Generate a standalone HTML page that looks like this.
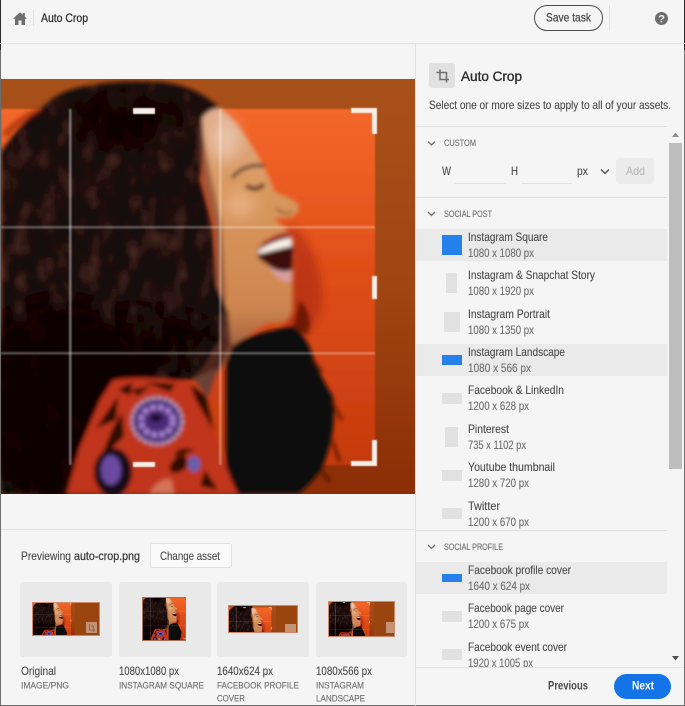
<!DOCTYPE html>
<html><head><meta charset="utf-8"><title>Auto Crop</title>
<style>
html,body{margin:0;padding:0;background:#f5f5f5;width:685px;height:706px;overflow:hidden}
svg{display:block}
text{font-family:"Liberation Sans",sans-serif;font-size:12px;fill:#4b4b4b}
.n{fill:#4b4b4b;stroke:#4b4b4b;stroke-width:.12}
.s{fill:#6e6e6e;stroke:#6e6e6e;stroke-width:.12}
.m{fill:#2c2c2c;stroke:#2c2c2c;stroke-width:.25}
.c{font-size:9px;fill:#6e6e6e;stroke:#6e6e6e;stroke-width:.12}
.b{font-weight:bold}
</style></head><body>
<svg width="685" height="706" viewBox="0 0 685 706" xmlns="http://www.w3.org/2000/svg">
<defs>
<filter id="bl" x="-5%" y="-5%" width="110%" height="110%"><feGaussianBlur stdDeviation="2.200"/></filter>
<filter id="bls" x="-5%" y="-5%" width="110%" height="110%"><feGaussianBlur stdDeviation=".8"/></filter>
<filter id="blm" x="-30%" y="-30%" width="160%" height="160%"><feGaussianBlur stdDeviation="4"/></filter>
<filter id="bl2" x="-30%" y="-30%" width="160%" height="160%"><feGaussianBlur stdDeviation="7"/></filter>
<filter id="th" x="-5%" y="-5%" width="110%" height="110%"><feGaussianBlur stdDeviation=".35"/></filter>
<filter id="hairtex" x="0" y="0" width="100%" height="100%">
<feTurbulence type="fractalNoise" baseFrequency=".07 .035" numOctaves="4" seed="11"/>
<feColorMatrix values="0 0 0 0 .32  0 0 0 0 .11  0 0 0 0 .07  1.3 0 0 0 -.58"/>
<feComposite in2="SourceAlpha" operator="in"/>
</filter>
<linearGradient id="bg" x1="0" y1="0" x2="0" y2="1"><stop offset="0" stop-color="#f4672a"/><stop offset=".45" stop-color="#e04e18"/><stop offset="1" stop-color="#c5390e"/></linearGradient>
<linearGradient id="band" x1="0" y1="0" x2="0" y2="1"><stop offset="0" stop-color="#a8501a"/><stop offset=".5" stop-color="#a14512"/><stop offset="1" stop-color="#8c2d06"/></linearGradient>
<linearGradient id="hairg" x1="0" y1="0" x2="0" y2="1"><stop offset="0" stop-color="#1a0908"/><stop offset=".55" stop-color="#150707"/><stop offset="1" stop-color="#0c0807"/></linearGradient>
<linearGradient id="skin" x1="0" y1="0" x2="0" y2="1"><stop offset="0" stop-color="#e2ae90"/><stop offset=".3" stop-color="#d9985e"/><stop offset=".75" stop-color="#cf8650"/><stop offset="1" stop-color="#8a4c34"/></linearGradient>
<clipPath id="listclip"><rect x="416" y="127" width="251" height="540"/></clipPath>
<clipPath id="t1"><rect x="32" y="602" width="68" height="33.500"/></clipPath>
<clipPath id="t2"><rect x="142" y="597" width="44" height="44"/></clipPath>
<clipPath id="t3"><rect x="228" y="605" width="70" height="28"/></clipPath>
<clipPath id="t4"><rect x="328" y="601" width="67" height="36"/></clipPath>
<symbol id="p" viewBox="1 79 414 415">
<rect x="1" y="79" width="414" height="415" fill="url(#band)"/>
<rect x="1" y="109" width="374" height="356" fill="url(#bg)" filter="url(#bls)"/>
<g filter="url(#bl)">
<!-- wild hair near mouth -->
<path d="M288 222C304 232 318 256 320 280 326 305 318 325 304 335L286 330 290 262Z" fill="#a8260a" opacity=".6" filter="url(#blm)"/>
<path d="M300 300C310 310 312 325 308 335L292 330Z" fill="#3a0c06" opacity=".6"/>
<!-- hair behind neck -->
<path d="M226 345 260 333 290 326C302 330 310 345 314 360 320 375 326 385 333 397 336 420 332 445 322 468 314 480 306 488 298 494H226Z" fill="#0d0807"/>
<path d="M312 360 322 372M330 400 342 420M332 440 340 462M320 470 330 482" stroke="#3a0c06" stroke-width="3" opacity=".7"/>
<!-- main hair -->
<path d="M1 152C14 132 28 118 40 110 48 100 58 94 70 90 90 84 120 80 160 82 185 84 205 94 220 108L205 130 200 180 212 225 216 285 228 310 232 345 218 372 190 380 110 382 85 430 60 494H1Z" fill="url(#hairg)"/>
<path d="M1 152C14 132 28 118 40 110 48 100 58 94 70 90 90 84 120 80 160 82 185 84 205 94 220 108L205 130 200 180 212 225 216 285 228 310 232 345 218 372 190 380 110 382 85 430 60 494H1Z" fill="#000" filter="url(#hairtex)" opacity=".75"/>
<ellipse cx="60" cy="405" rx="85" ry="100" fill="#0a0605" opacity=".85" filter="url(#bl2)"/>
<ellipse cx="140" cy="345" rx="70" ry="30" fill="#0a0605" opacity=".65" filter="url(#bl2)"/>
<ellipse cx="125" cy="120" rx="55" ry="28" fill="#0a0605" opacity=".75" filter="url(#bl2)"/>
<path d="M5 135C14 124 26 116 40 110" stroke="#8a1f0a" stroke-width="6" opacity=".6" fill="none"/>
<!-- skin -->
<path d="M202 118C208 110 216 107 222 109 232 117 242 130 252 146 262 162 270 178 275 192 284 196 292 198 298 204 300 210 298 214 292 217L274 219C280 224 286 228 290 236L293 250 292 278 292 310C290 318 285 324 276 323 266 322 256 330 246 337L232 346 226 362 218 372 230 346 228 312 218 288 216 225 206 180Z" fill="url(#skin)"/>
<path d="M200 118C196 135 198 165 204 190L214 225 216 288 228 312 232 345 218 372 208 380 196 378 220 340 226 300 222 225 210 170Z" fill="#7a4030" opacity=".6"/>
<ellipse cx="240" cy="205" rx="16" ry="14" fill="#eeb890" opacity=".7" filter="url(#bl2)"/>
<ellipse cx="225" cy="140" rx="14" ry="20" fill="#eccab4" opacity=".8" filter="url(#bl2)"/>
<!-- brow/eye -->
<path d="M232 178C240 168 252 164 264 166" stroke="#1e0c08" stroke-width="3" fill="none"/>
<path d="M246 186C254 190 258 190 264 184" stroke="#3a1c10" stroke-width="4" fill="none"/>
<path d="M276 208C282 214 288 214 293 212" stroke="#8a5030" stroke-width="2" fill="none"/>
<!-- mouth -->
<path d="M258 248 288 232 293 246 292 270 286 276 272 268 258 258Z" fill="#3c0a0e"/>
<path d="M259 250C270 243 282 239 291 238L292 246C282 248 268 252 258 254Z" fill="#fbf3ea"/>
<path d="M262 243C272 236 280 232 290 232L288 237C278 238 270 241 262 247Z" fill="#a8302c"/>
<path d="M268 266C278 272 286 272 292 270L291 282C282 282 274 276 268 266Z" fill="#d8a0a0"/>
<!-- jacket -->
<path d="M113 380C135 376 165 378 187 382L203 393 213 430 230 477 238 494H67L80 447 100 400Z" fill="#c0341a"/>
<path d="M190 384 206 396 214 432 196 400ZM170 465C180 450 190 452 186 468 176 476 168 474 170 465ZM118 390 132 382 130 396ZM112 430 122 412 124 436 100 460ZM194 450C185 446 172 450 176 458ZM145 382 175 384 170 392ZM96 428 118 396 116 420ZM205 470 218 490 200 486ZM130 390 150 386 138 396Z" fill="#2e0a06"/>
<ellipse cx="113" cy="472" rx="19" ry="24" fill="#140c12"/>
<ellipse cx="111" cy="470" rx="10" ry="15" fill="#6a4aa0"/>
<ellipse cx="157" cy="421" rx="26" ry="24" fill="#4c2a78"/>
<ellipse cx="157" cy="421" rx="25" ry="23" fill="none" stroke="#e8d8ee" stroke-width="2.500" stroke-dasharray="3 3"/>
<ellipse cx="157" cy="421" rx="16" ry="14" fill="none" stroke="#b890e0" stroke-width="5" stroke-dasharray="5 3"/>
<ellipse cx="156" cy="418" rx="6" ry="4" fill="#1a0c28"/>
<ellipse cx="194" cy="464" rx="6" ry="8" fill="#6060b0"/>
<path d="M150 494C152 485 165 476 172 480L174 494Z" fill="#e8b098" opacity=".5"/>
<!-- neck-skin collar -->
<path d="M193 378 218 368 208 398Z" fill="#6a4034"/>
</g>
<!-- grid -->
<g fill="#fff" filter="url(#bls)">
<rect x="69" y="109" width="2.500" height="356" opacity=".42"/>
<rect x="219" y="109" width="2.500" height="356" opacity=".32"/>
<rect x="1" y="226" width="374" height="2.500" opacity=".3"/>
<rect x="1" y="352" width="374" height="2.500" opacity=".3"/>
</g>
<g fill="#f4efe9" style="filter:blur(.6px)">
<rect x="133" y="108" width="22" height="6"/>
<rect x="133" y="462" width="22" height="5"/>
<rect x="372" y="276" width="5" height="23"/>
<path d="M351 108H377V134H372V113H351Z"/>
<path d="M372 440H377V466H351V461H372Z"/>
</g>
</symbol>
</defs>

<rect width="685" height="706" fill="#f5f5f5"/>
<!-- window edges -->
<rect x="0" y="0" width="1" height="50" fill="#2c2c2c"/>
<rect x="0" y="50" width="1" height="656" fill="#6e6e6e"/>
<rect x="684" y="0" width="1" height="50" fill="#2c2c2c"/>
<rect x="684" y="50" width="1" height="656" fill="#6e6e6e"/>
<rect x="0" y="705" width="685" height="1" fill="#6e6e6e"/>

<!-- header -->
<path d="M20 12.200 13 18.700H15V25H18.500V20.500H21.500V25H25V18.700H27L24.800 16.600V13H22.800V14.700Z" fill="#6e6e6e"/>
<rect x="33" y="10" width="1" height="16" fill="#e1e1e1"/>
<text x="41" y="22" class="m" textLength="47" lengthAdjust="spacingAndGlyphs">Auto Crop</text>
<rect x="534.500" y="5.500" width="68" height="25" rx="12.500" fill="#f5f5f5" stroke="#4b4b4b"/>
<text x="546" y="21.500" class="n" textLength="45" lengthAdjust="spacingAndGlyphs" style="stroke-width:.25">Save task</text>
<rect x="609" y="5" width="1" height="26" fill="#e1e1e1"/>
<circle cx="661.500" cy="18.500" r="6.500" fill="#6e6e6e"/>
<text x="658.300" y="22.500" style="font-size:11px;font-weight:bold;fill:#f5f5f5">?</text>
<rect x="0" y="43" width="685" height="1" fill="#e1e1e1"/>
<rect x="415" y="44" width="1" height="662" fill="#e1e1e1"/>

<!-- photo -->
<use href="#p" x="1" y="79" width="414" height="415"/>

<!-- preview -->
<rect x="1" y="529" width="414" height="1" fill="#e1e1e1"/>
<text x="21" y="560" class="n" textLength="50" lengthAdjust="spacingAndGlyphs">Previewing</text>
<text x="74" y="560" class="m" textLength="66" lengthAdjust="spacingAndGlyphs" style="fill:#3a3a3a;stroke:#3a3a3a">auto-crop.png</text>
<rect x="150.500" y="543.500" width="81" height="24" rx="2" fill="#fafafa" stroke="#e1e1e1"/>
<text x="160" y="560" class="n" textLength="60" lengthAdjust="spacingAndGlyphs">Change asset</text>

<rect x="20" y="582" width="92" height="75" rx="3" fill="#e9e9e9"/>
<rect x="119" y="582" width="92" height="75" rx="3" fill="#e9e9e9"/>
<rect x="217" y="582" width="92" height="75" rx="3" fill="#e9e9e9"/>
<rect x="316" y="582" width="91" height="75" rx="3" fill="#e9e9e9"/>

<g clip-path="url(#t1)"><rect x="32" y="602" width="68" height="34" fill="#9a4510"/><use href="#p" x="33" y="599.500" width="42" height="42" filter="url(#th)"/></g>
<rect x="32.500" y="602.500" width="67" height="33" fill="none" stroke="#cf8a6c"/>
<rect x="86" y="622" width="11" height="11" fill="#fff" fill-opacity=".42"/>
<path d="M89.500 624V630H95M91 626H93.500V632" stroke="#8a6a5a" fill="none" stroke-width="1"/>

<g clip-path="url(#t2)"><rect x="142" y="597" width="44" height="44" fill="#9a4510"/><use href="#p" x="142" y="593.500" width="49" height="49" filter="url(#th)"/></g>
<rect x="142.500" y="597.500" width="43" height="43" fill="none" stroke="#a87058" stroke-width="1"/>

<g clip-path="url(#t3)"><rect x="228" y="605" width="70" height="28" fill="#9a4510"/><use href="#p" x="228" y="604" width="48" height="48" filter="url(#th)"/>
<rect x="285" y="624" width="11" height="11" fill="#fff" fill-opacity=".42"/></g>
<rect x="228.500" y="605.500" width="69" height="27" fill="none" stroke="#cf8a6c"/>

<g clip-path="url(#t4)"><rect x="328" y="601" width="67" height="36" fill="#9a4510"/><use href="#p" x="328" y="599" width="46" height="46" filter="url(#th)"/>
<rect x="386" y="622" width="11" height="11" fill="#fff" fill-opacity=".42"/></g>
<rect x="328.500" y="601.500" width="66" height="35" fill="none" stroke="#cf8a6c"/>

<text x="21" y="675" class="n" textLength="35" lengthAdjust="spacingAndGlyphs">Original</text>
<text x="21" y="688.500" class="c" textLength="48" lengthAdjust="spacingAndGlyphs">IMAGE/PNG</text>
<text x="119" y="675" class="n" textLength="60" lengthAdjust="spacingAndGlyphs">1080x1080 px</text>
<text x="119" y="688.500" class="c" textLength="85" lengthAdjust="spacingAndGlyphs">INSTAGRAM SQUARE</text>
<text x="217" y="675" class="n" textLength="56" lengthAdjust="spacingAndGlyphs">1640x624 px</text>
<text x="217" y="688.500" class="c" textLength="82" lengthAdjust="spacingAndGlyphs">FACEBOOK PROFILE</text>
<text x="217" y="701.500" class="c" textLength="28" lengthAdjust="spacingAndGlyphs">COVER</text>
<text x="316" y="675" class="n" textLength="56" lengthAdjust="spacingAndGlyphs">1080x566 px</text>
<text x="316" y="688.500" class="c" textLength="48" lengthAdjust="spacingAndGlyphs">INSTAGRAM</text>
<text x="316" y="701.500" class="c" textLength="49" lengthAdjust="spacingAndGlyphs">LANDSCAPE</text>

<!-- right panel head -->
<rect x="429" y="63" width="26" height="25" rx="3" fill="#e1e1e1"/>
<path d="M440 69.500V79.500H449M436.500 72.500H446.500V82.500" fill="none" stroke="#6e6e6e" stroke-width="1.500"/>
<text x="461" y="81" class="m" style="font-size:14px;stroke-width:.35" textLength="61" lengthAdjust="spacingAndGlyphs">Auto Crop</text>
<text x="429" y="109" class="n" textLength="242" lengthAdjust="spacingAndGlyphs">Select one or more sizes to apply to all of your assets.</text>
<rect x="416" y="126" width="251" height="1" fill="#e1e1e1"/>

<!-- scrollbar -->
<rect x="669" y="143" width="13" height="326" fill="#bdbdbd"/>
<path d="M675.500 132.500 679 137H672Z" fill="#8e8e8e"/>
<path d="M672 656H679L675.500 660.500Z" fill="#505050"/>

<!-- custom -->
<path d="M428 141.500 431.500 145 435 141.500" fill="none" stroke="#6e6e6e" stroke-width="1.300"/>
<text x="444" y="146" class="c" textLength="32" lengthAdjust="spacingAndGlyphs">CUSTOM</text>
<text x="442" y="175" class="n" textLength="9" lengthAdjust="spacingAndGlyphs">W</text>
<rect x="455" y="183" width="51" height="1" fill="#e1e1e1"/>
<text x="511" y="175" class="n" textLength="7" lengthAdjust="spacingAndGlyphs">H</text>
<rect x="521" y="183" width="51" height="1" fill="#e1e1e1"/>
<text x="577" y="175" class="n" textLength="11" lengthAdjust="spacingAndGlyphs">px</text>
<path d="M601 169.500 605 173.500 609 169.500" fill="none" stroke="#4b4b4b" stroke-width="1.300"/>
<rect x="616" y="158" width="38" height="26" rx="3" fill="#ebebeb"/>
<text x="626" y="175" style="fill:#b3b3b3" textLength="19" lengthAdjust="spacingAndGlyphs">Add</text>
<rect x="416" y="197" width="251" height="1" fill="#e1e1e1"/>

<!-- social post -->
<path d="M428 212 431.500 215.500 435 212" fill="none" stroke="#6e6e6e" stroke-width="1.300"/>
<text x="444" y="217" class="c" textLength="48" lengthAdjust="spacingAndGlyphs">SOCIAL POST</text>

<g clip-path="url(#listclip)">
<rect x="416" y="229" width="251" height="32" fill="#eaeaea"/>
<rect x="416" y="344" width="251" height="32" fill="#eaeaea"/>
<rect x="416" y="562" width="251" height="32" fill="#eaeaea"/>

<rect x="442" y="235" width="20" height="20" fill="#2680eb"/>
<text x="468" y="241" class="n" textLength="80" lengthAdjust="spacingAndGlyphs">Instagram Square</text>
<text x="468" y="257" class="s" textLength="66" lengthAdjust="spacingAndGlyphs">1080 x 1080 px</text>

<rect x="446" y="273" width="11" height="20" fill="#e1e1e1"/>
<text x="468" y="279" class="n" textLength="127" lengthAdjust="spacingAndGlyphs">Instagram &amp; Snapchat Story</text>
<text x="468" y="295" class="s" textLength="66" lengthAdjust="spacingAndGlyphs">1080 x 1920 px</text>

<rect x="444" y="312" width="16" height="20" fill="#e1e1e1"/>
<text x="468" y="318" class="n" textLength="82" lengthAdjust="spacingAndGlyphs">Instagram Portrait</text>
<text x="468" y="334" class="s" textLength="66" lengthAdjust="spacingAndGlyphs">1080 x 1350 px</text>

<rect x="442" y="355" width="20" height="10" fill="#2680eb"/>
<text x="468" y="356" class="n" textLength="97" lengthAdjust="spacingAndGlyphs">Instagram Landscape</text>
<text x="468" y="372" class="s" textLength="63" lengthAdjust="spacingAndGlyphs">1080 x 566 px</text>

<rect x="442" y="393" width="20" height="11" fill="#e1e1e1"/>
<text x="468" y="394" class="n" textLength="96" lengthAdjust="spacingAndGlyphs">Facebook &amp; LinkedIn</text>
<text x="468" y="410" class="s" textLength="61" lengthAdjust="spacingAndGlyphs">1200 x 628 px</text>

<rect x="445" y="427" width="13" height="20" fill="#e1e1e1"/>
<text x="468" y="433" class="n" textLength="41" lengthAdjust="spacingAndGlyphs">Pinterest</text>
<text x="468" y="449" class="s" textLength="58" lengthAdjust="spacingAndGlyphs">735 x 1102 px</text>

<rect x="442" y="470" width="20" height="11" fill="#e1e1e1"/>
<text x="468" y="471" class="n" textLength="87" lengthAdjust="spacingAndGlyphs">Youtube thumbnail</text>
<text x="468" y="487" class="s" textLength="61" lengthAdjust="spacingAndGlyphs">1280 x 720 px</text>

<rect x="442" y="508" width="20" height="11" fill="#e1e1e1"/>
<text x="468" y="510" class="n" textLength="32" lengthAdjust="spacingAndGlyphs">Twitter</text>
<text x="468" y="526" class="s" textLength="61" lengthAdjust="spacingAndGlyphs">1200 x 670 px</text>

<rect x="416" y="530" width="251" height="1" fill="#e1e1e1"/>
<path d="M428 545 431.500 548.500 435 545" fill="none" stroke="#6e6e6e" stroke-width="1.300"/>
<text x="444" y="550" class="c" textLength="59" lengthAdjust="spacingAndGlyphs">SOCIAL PROFILE</text>

<rect x="442" y="574" width="20" height="8" fill="#2680eb"/>
<text x="468" y="574" class="n" textLength="103" lengthAdjust="spacingAndGlyphs">Facebook profile cover</text>
<text x="468" y="590" class="s" textLength="62" lengthAdjust="spacingAndGlyphs">1640 x 624 px</text>

<rect x="442" y="611" width="20" height="11" fill="#e1e1e1"/>
<text x="468" y="612" class="n" textLength="96" lengthAdjust="spacingAndGlyphs">Facebook page cover</text>
<text x="468" y="628" class="s" textLength="61" lengthAdjust="spacingAndGlyphs">1200 x 675 px</text>

<rect x="442" y="649" width="20" height="11" fill="#e1e1e1"/>
<text x="468" y="651" class="n" textLength="99" lengthAdjust="spacingAndGlyphs">Facebook event cover</text>
<text x="468" y="667" class="s" textLength="65" lengthAdjust="spacingAndGlyphs">1920 x 1005 px</text>
</g>

<!-- footer -->
<rect x="416" y="667" width="268" height="1" fill="#e1e1e1"/>
<text x="548" y="689.500" class="b" textLength="40" lengthAdjust="spacingAndGlyphs">Previous</text>
<rect x="614" y="674" width="57" height="25" rx="12.500" fill="#1473e6"/>
<text x="632" y="689.500" class="b" style="fill:#fff" textLength="22" lengthAdjust="spacingAndGlyphs">Next</text>
</svg>
</body></html>
